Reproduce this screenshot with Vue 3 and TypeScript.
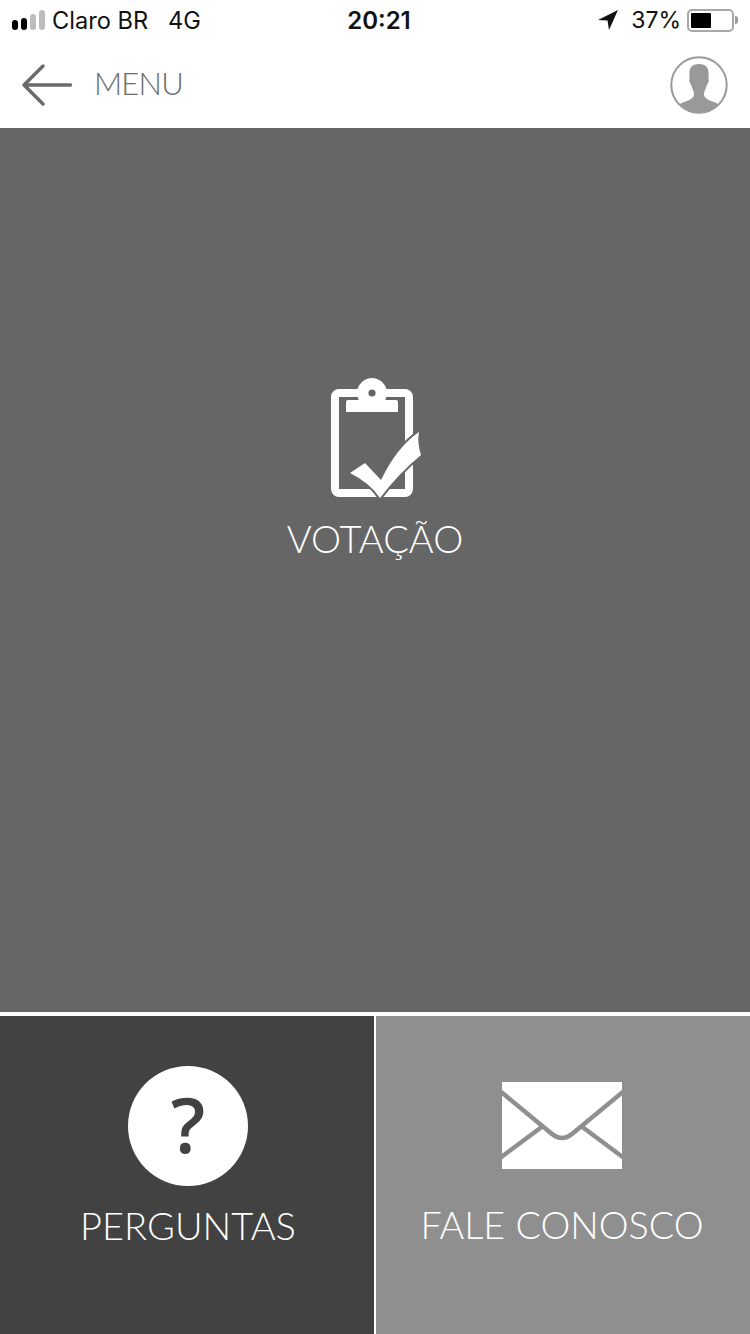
<script setup lang="ts">
const signalBars = [
  { h: 10, c: '#000' },
  { h: 12, c: '#000' },
  { h: 16, c: '#bdbdbd' },
  { h: 20, c: '#bdbdbd' },
]
</script>

<template>
  <div class="screen">
    <div class="status">
      <div class="status-left">
        <div class="signal">
          <span v-for="(b, i) in signalBars" :key="i" class="bar" :style="{ height: b.h + 'px', background: b.c }"></span>
        </div>
        <span class="carrier">Claro BR</span>
        <span class="net">4G</span>
      </div>
      <div class="time">20:21</div>
      <div class="status-right">
        <svg class="loc" width="20" height="20" viewBox="0 0 20 20"><path d="M20 0 L0 10 L9.5 10.5 L11 20 Z" fill="#111" /></svg>
        <span class="pct">37%</span>
        <div class="battery"><div class="battery-fill"></div></div>
        <div class="battery-tip"></div>
      </div>
    </div>

    <header class="head">
      <div class="back">
        <svg width="52" height="44" viewBox="0 0 52 44"><path d="M49.500 22 H3 M22 3 L3 22 L22 41" fill="none" stroke="#6b6b6b" stroke-width="3.500" stroke-linecap="round" stroke-linejoin="round" /></svg>
        <span class="menu">MENU</span>
      </div>
      <svg class="avatar" width="58" height="58" viewBox="0 0 58 58">
        <defs><clipPath id="av"><circle cx="29" cy="29" r="27.5" /></clipPath></defs>
        <g clip-path="url(#av)">
          <path d="M29 8 C21 8 19 13 19.500 19 C19.700 23 18.800 24 19.500 26 C20 28 21 28 21.500 30 C22 33 24 35 24 38 C24 42 20 44 14 46 C9 48 6 50 4 58 H54 C52 50 49 48 44 46 C38 44 34 42 34 38 C34 35 36 33 36.500 30 C37 28 38 28 38.500 26 C39.200 24 38.300 23 38.500 19 C39 13 37 8 29 8 Z" fill="#999" />
        </g>
        <circle cx="29" cy="29" r="27.7" fill="none" stroke="#999" stroke-width="2" />
      </svg>
    </header>

    <main class="vote">
      <svg class="clip" width="100" height="125" viewBox="0 0 100 125">
        <rect x="10" y="18" width="74" height="100" rx="4" fill="none" stroke="#fff" stroke-width="8" />
        <path d="M21 37 V27 Q21 25 23 25 H33.700 A15 15 0 1 1 60.300 25 H71 Q73 25 73 27 V37 Z" fill="#fff" />
        <circle cx="47" cy="18" r="3.600" fill="#666" />
        <path d="M25 98 L40 88 L56 105 Q72 72 94 57 Q92 68 96 80 Q74 98 55 123 Q45 108 25 98 Z" fill="#fff" stroke="#666" stroke-width="4" paint-order="stroke" stroke-linejoin="round" />
      </svg>
      <div class="label vote-label">VOTAÇÃO</div>
    </main>

    <div class="bottom">
      <section class="tile tile-dark">
        <div class="circle">?</div>
        <div class="label">PERGUNTAS</div>
      </section>
      <section class="tile tile-light">
        <svg class="mail" width="120" height="87" viewBox="0 0 120 87">
          <rect width="120" height="87" fill="#fff" />
          <path d="M-2 9 L50 52 Q60 60 70 52 L122 9" fill="none" stroke="#8f8f8f" stroke-width="4.500" />
          <path d="M-2 76 L41 44 M122 76 L79 44" fill="none" stroke="#8f8f8f" stroke-width="4.500" />
        </svg>
        <div class="label">FALE CONOSCO</div>
      </section>
    </div>
  </div>
</template>

<style scoped>
.screen {
  width: 750px;
  height: 1334px;
  display: flex;
  flex-direction: column;
  background: #fff;
  overflow: hidden;
}
.status {
  height: 40px;
  flex: none;
  display: grid;
  grid-template-columns: 1fr auto 1fr;
  align-items: center;
  font-family: "Inter", "Liberation Sans", sans-serif;
  font-size: 24px;
  color: #111;
}
.status-left {
  display: flex;
  align-items: center;
  padding-left: 12px;
}
.signal {
  display: flex;
  align-items: flex-end;
  gap: 3px;
  height: 20px;
  margin-right: 7px;
}
.bar {
  width: 6px;
  border-radius: 3px;
  display: block;
}
.carrier {
  font-size: 23.600px;
}
.net {
  font-size: 23.600px;
  margin-left: 20px;
}
.time {
  font-weight: 600;
  padding-left: 8px;
}
.status-right {
  display: flex;
  align-items: center;
  justify-content: flex-end;
  padding-right: 12px;
}
.loc {
  margin-right: 13px;
}
.pct {
  font-size: 23px;
  margin-right: 6px;
}
.battery {
  width: 47px;
  height: 23px;
  box-sizing: border-box;
  border: 2px solid #a8a8a8;
  border-radius: 5px;
  padding: 2px;
}
.battery-fill {
  width: 20px;
  height: 100%;
  background: #000;
  border-radius: 1px;
}
.battery-tip {
  width: 3px;
  height: 8px;
  margin-left: 1px;
  background: #999;
  border-radius: 0 3px 3px 0;
}
.head {
  height: 88px;
  flex: none;
  box-sizing: border-box;
  display: flex;
  align-items: center;
  justify-content: space-between;
  padding: 2px 22px 0 21px;
}
.back {
  display: flex;
  align-items: center;
  gap: 21px;
}
.menu {
  font-family: "Lato", "Open Sans", sans-serif;
  font-weight: 300;
  font-size: 31px;
  letter-spacing: -0.800px;
  color: #6b6b6b;
  margin-bottom: 4px;
}
.vote {
  height: 884px;
  flex: none;
  box-sizing: border-box;
  padding-top: 247px;
  background: #666;
  display: flex;
  flex-direction: column;
  align-items: center;
}
.clip {
  display: block;
}
.label {
  font-family: "Lato", "Open Sans", sans-serif;
  font-weight: 300;
  font-size: 38px;
  line-height: 44px;
  color: #fff;
  white-space: nowrap;
}
.vote-label {
  margin-top: 16px;
}
.bottom {
  flex: 1;
  margin-top: 4px;
  display: grid;
  grid-template-columns: 374px 374px;
  gap: 2px;
}
.tile {
  display: flex;
  flex-direction: column;
  align-items: center;
}
.tile-dark {
  background: #424242;
  padding: 50px 0 0 2px;
}
.tile-light {
  background: #8f8f8f;
  padding: 66px 2px 0 0;
}
.tile-light .label {
  font-size: 37.700px;
  margin-top: 34px;
}
.circle {
  width: 120px;
  height: 120px;
  border-radius: 50%;
  background: #fff;
  color: #424242;
  font-family: "Open Sans", "Liberation Sans", sans-serif;
  font-weight: 600;
  font-size: 76px;
  line-height: 116px;
  text-align: center;
}
.tile-dark .label {
  margin-top: 17px;
}
.mail {
  display: block;
}
</style>
